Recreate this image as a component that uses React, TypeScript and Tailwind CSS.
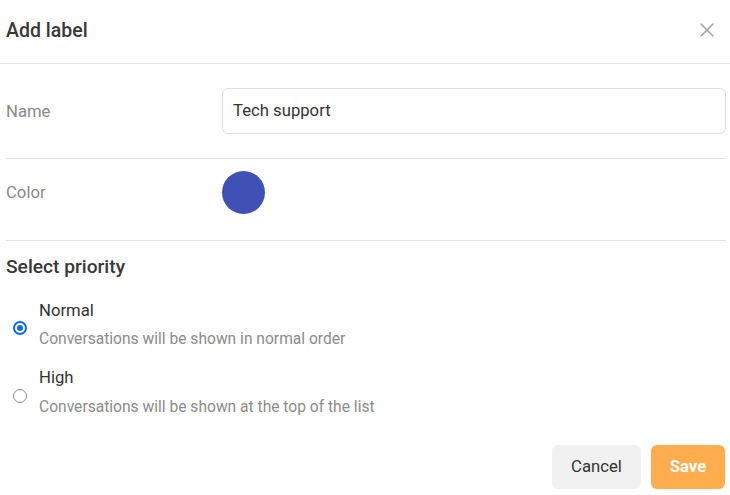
import React from "react";

export default function App() {
  return (
    <div className="w-[730px] h-[495px] bg-white font-['Roboto',sans-serif] text-[#333]">
      <div className="h-[64px] border-b border-[#e2e2e2] flex items-center justify-between pl-[6px] pr-[16px]">
        <div className="text-[19.5px] font-medium text-[#383838] leading-[24px] -mt-[2px]">Add label</div>
        <svg width="14" height="14" viewBox="0 0 14 14" className="-mt-[4px]">
          <path d="M1 1 L13 13 M13 1 L1 13" stroke="#a3a3a3" strokeWidth="1.6" strokeLinecap="round" />
        </svg>
      </div>
      <div className="pl-[6px] pr-[4px]">
        <div className="flex items-center pt-[24px] pb-[24px] border-b border-[#e2e2e2]">
          <div className="w-[216px] text-[16.7px] text-[#8a8a8a] mt-[1px]">Name</div>
          <div className="flex-1 h-[46px] border border-[#dedede] rounded-[6px] flex items-center pl-[10px] text-[16.7px] text-[#333]">
            Tech support
          </div>
        </div>
        <div className="flex items-center pt-[12px] pb-[26px] border-b border-[#e2e2e2]">
          <div className="w-[216px] text-[16.7px] text-[#8a8a8a] mt-[1px]">Color</div>
          <div className="w-[43px] h-[43px] rounded-full bg-[#3f51b5]" />
        </div>
        <div className="mt-[13px] text-[19.2px] font-medium leading-[26px] text-[#383838]">Select priority</div>
        <div className="mt-[21px] flex">
          <div className="pl-[7px] pt-[20px]">
            <div className="w-[14px] h-[14px] rounded-full border-[2px] border-[#0b6bdc] flex items-center justify-center">
              <div className="w-[6px] h-[6px] rounded-full bg-[#0b6bdc]" />
            </div>
          </div>
          <div className="ml-[12px]">
            <div className="text-[16.7px] leading-[20px] text-[#333]">Normal</div>
            <div className="mt-[8px] text-[15.6px] leading-[20px] text-[#8c8c8c]">Conversations will be shown in normal order</div>
          </div>
        </div>
        <div className="mt-[19px] flex">
          <div className="pl-[7px] pt-[21px]">
            <div className="w-[14px] h-[14px] rounded-full border-[1.5px] border-[#8b8b95]" />
          </div>
          <div className="ml-[12px]">
            <div className="text-[16.7px] leading-[20px] text-[#333]">High</div>
            <div className="mt-[9px] text-[15.6px] leading-[20px] text-[#8c8c8c]">Conversations will be shown at the top of the list</div>
          </div>
        </div>
        <div className="mt-[28px] flex justify-end gap-[10px] pr-[1px]">
          <div className="w-[89px] h-[44px] rounded-[6px] bg-[#f1f1f1] flex items-center justify-center text-[16.7px] text-[#333]">Cancel</div>
          <div className="w-[74px] h-[44px] rounded-[6px] bg-[#ffad4f] flex items-center justify-center text-[16.7px] font-bold text-white">Save</div>
        </div>
      </div>
    </div>
  );
}
